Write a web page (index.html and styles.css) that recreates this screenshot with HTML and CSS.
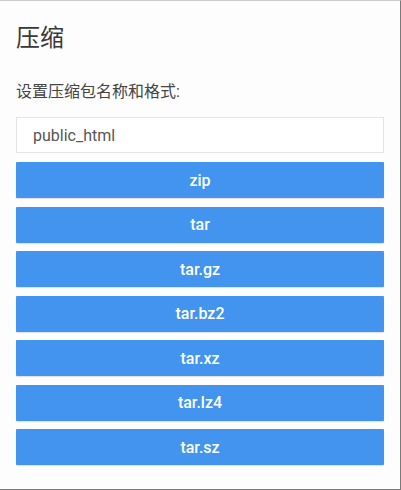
FILE: index.html
```html
<!DOCTYPE html>
<html lang="zh">
<head>
<meta charset="utf-8">
<title>压缩</title>
<link rel="stylesheet" href="styles.css">
</head>
<body>
<div class="frame">
  <h1 class="title">压缩</h1>
  <p class="label">设置压缩包名称和格式:</p>
  <input class="name-input" type="text" value="public_html">
  <div class="formats">
    <button class="fmt-btn">zip</button>
    <button class="fmt-btn">tar</button>
    <button class="fmt-btn">tar.gz</button>
    <button class="fmt-btn">tar.bz2</button>
    <button class="fmt-btn">tar.xz</button>
    <button class="fmt-btn">tar.lz4</button>
    <button class="fmt-btn">tar.sz</button>
  </div>
</div>
</body>
</html>
```
FILE: styles.css
```css
html, body {
  margin: 0;
  padding: 0;
  background: #fdfdfd;
}
.frame {
  box-sizing: border-box;
  width: 401px;
  height: 490px;
  border-top: 1px solid #cccccc;
  border-right: 1px solid #7a7a7a;
  border-bottom: 1px solid #7a7a7a;
  background: #fdfdfd;
  padding: 22px 16px 0 16px;
  font-family: Roboto, "Noto Sans CJK SC", sans-serif;
  color: #333;
}
.title {
  margin: 0;
  font-family: Roboto, "Noto Sans CJK SC", sans-serif;
  font-size: 24px;
  font-weight: 400;
  line-height: 30px;
  color: #383838;
}
.label {
  margin: 29px 0 0 0;
  font-size: 16px;
  line-height: 20px;
  color: #444;
}
.name-input {
  display: block;
  box-sizing: border-box;
  width: 100%;
  height: 36px;
  margin-top: 15px;
  padding: 0 16px;
  border: 1px solid #e4e4e4;
  background: #fff;
  font-family: Roboto, sans-serif;
  font-size: 16px;
  color: #555;
  outline: none;
}
.formats {
  display: flex;
  flex-direction: column;
  gap: 8.5px;
  margin-top: 9px;
}
.fmt-btn {
  display: block;
  box-sizing: border-box;
  width: 100%;
  height: 36px;
  border: none;
  border-radius: 1px;
  background: #4294ee;
  color: #fff;
  font-family: Roboto, sans-serif;
  font-size: 16px;
  font-weight: 500;
  box-shadow: 0 1px 1px rgba(0, 0, 0, 0.12);
  cursor: pointer;
}
```
